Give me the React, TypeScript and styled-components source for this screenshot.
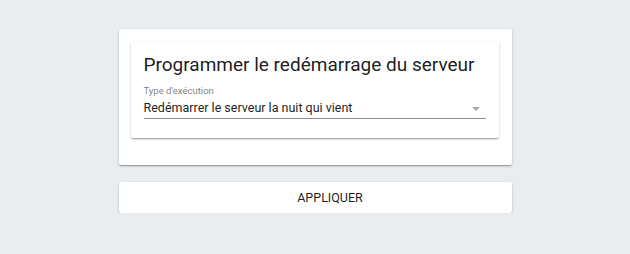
import React from "react";
import styled, { createGlobalStyle } from "styled-components";

const GlobalStyle = createGlobalStyle`
  html, body {
    margin: 0;
    padding: 0;
    background: #eaedf0;
    font-family: Roboto, "Liberation Sans", sans-serif;
    color: rgba(0, 0, 0, 0.87);
  }
`;

const Page = styled.div`
  display: flex;
  flex-direction: column;
  align-items: center;
  gap: 17px;
  padding-top: 29px;
`;

const Paper = styled.div`
  background: #fff;
  border-radius: 2px;
  box-shadow: 0 1px 3px rgba(0, 0, 0, 0.2), 0 1px 1px rgba(0, 0, 0, 0.14),
    0 2px 1px -1px rgba(0, 0, 0, 0.12);
`;

const OuterCard = styled(Paper)`
  width: 393px;
  height: 136px;
  box-sizing: border-box;
  padding: 13px 13px 0 12px;
`;

const InnerCard = styled(Paper)`
  padding: 11px 13px 19px;
`;

const Title = styled.h2`
  margin: 0 0 8px;
  font-size: 19px;
  font-weight: 400;
  line-height: 24px;
  white-space: nowrap;
  color: rgba(0, 0, 0, 0.9);
`;

const Field = styled.div`
  display: flex;
  flex-direction: column;
`;

const Label = styled.label`
  font-size: 9.5px;
  line-height: 12px;
  color: rgba(0, 0, 0, 0.54);
`;

const SelectRow = styled.div`
  display: flex;
  align-items: center;
  justify-content: space-between;
  height: 21px;
  border-bottom: 1px solid rgba(0, 0, 0, 0.45);
`;

const Value = styled.span`
  font-size: 12.5px;
  color: rgba(0, 0, 0, 0.9);
`;

const Arrow = styled.span`
  width: 0;
  height: 0;
  margin: 2px 6px 0 0;
  border-left: 4px solid transparent;
  border-right: 4px solid transparent;
  border-top: 4px solid rgba(0, 0, 0, 0.35);
`;

const Button = styled(Paper).attrs({ as: "button" })`
  width: 393px;
  height: 31px;
  padding: 0 0 0 30px;
  border: none;
  font-family: inherit;
  font-size: 12.5px;
  font-weight: 400;
  color: rgba(0, 0, 0, 0.9);
  cursor: pointer;
`;

export default function App() {
  return (
    <>
      <GlobalStyle />
      <Page>
        <OuterCard>
          <InnerCard>
            <Title>Programmer le redémarrage du serveur</Title>
            <Field>
              <Label>Type d'exécution</Label>
              <SelectRow>
                <Value>Redémarrer le serveur la nuit qui vient</Value>
                <Arrow />
              </SelectRow>
            </Field>
          </InnerCard>
        </OuterCard>
        <Button>APPLIQUER</Button>
      </Page>
    </>
  );
}
